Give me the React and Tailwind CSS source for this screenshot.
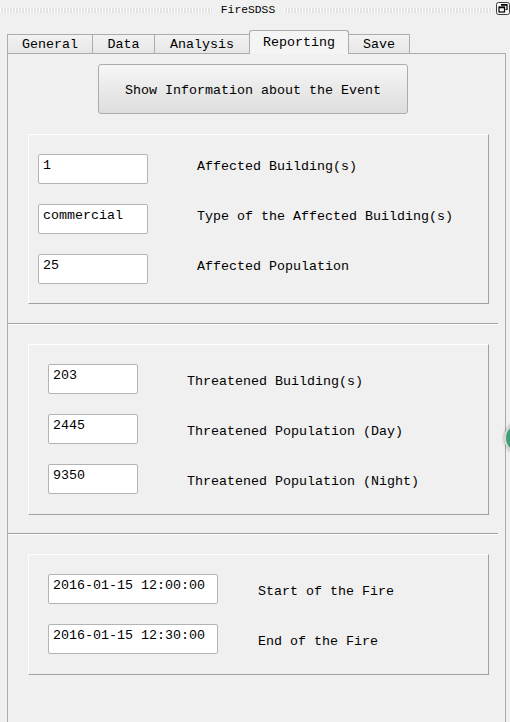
import React from "react";

const font = "font-['Liberation_Mono','DejaVu_Sans_Mono',monospace]";
const dots =
  "h-[5px] bg-[linear-gradient(90deg,#ffffff_50%,#e2e2e2_50%)] bg-[length:3px_5px]";

const tabs = [
  { name: "General", w: "w-[85px]" },
  { name: "Data", w: "w-[62px]" },
  { name: "Analysis", w: "w-[95px]" },
  { name: "Reporting", w: "w-[100px]", active: true },
  { name: "Save", w: "w-[61px]", last: true },
];

const Field = ({ value, width }) => (
  <div
    className={`${width} h-[30px] shrink-0 bg-white border border-[#b4b4b4] rounded-[2px] pl-[4px] pt-[3px] text-[13.33px] leading-[16px] text-black`}
  >
    {value}
  </div>
);

const Row = ({ value, width, label, gap, shift }) => (
  <div className="flex items-start">
    <Field value={value} width={width} />
    <span
      className={`${gap} ${shift} text-[13.33px] leading-[16px] text-black whitespace-pre`}
    >
      {label}
    </span>
  </div>
);

const Group = ({ children, height, pad }) => (
  <div
    className={`ml-[20px] w-[461px] ${height} border-t border-l border-white border-r border-b border-r-[#a0a0a0] border-b-[#a0a0a0] ${pad} flex flex-col gap-[20px]`}
  >
    {children}
  </div>
);

const Separator = () => (
  <div className="w-[490px] h-[2px] border-t border-[#a0a0a0] border-b border-b-white" />
);

const RestoreIcon = () => (
  <svg width="14" height="13" viewBox="0 0 14 13" className="shrink-0">
    <rect x="0.5" y="0.5" width="13" height="12" rx="2" fill="#f4f4f4" stroke="#3c3c3c" />
    <path d="M5 2.5h6v5h-1.5" fill="none" stroke="#000" strokeWidth="1.2" />
    <rect x="3" y="5" width="5.5" height="5" fill="none" stroke="#000" strokeWidth="1.2" />
    <path d="M3 5.6h5.5M5 3.1h6" stroke="#000" strokeWidth="1.2" />
  </svg>
);

export default function App() {
  return (
    <div
      className={`relative w-[510px] h-[722px] overflow-hidden bg-[#f0f0f0] ${font} flex flex-col`}
    >
      {/* title bar */}
      <div className="h-[20px] flex items-center shrink-0">
        <div className={`w-[212px] ${dots}`} />
        <div className="w-[73px] text-center text-[11.33px] leading-[14px] text-black">
          FireSDSS
        </div>
        <div className={`w-[209px] ${dots}`} />
        <div className="ml-[3px] -mt-[4px]">
          <RestoreIcon />
        </div>
      </div>

      {/* tabs */}
      <div className="mt-[11px] h-[22px] flex items-end pl-[7px] shrink-0">
        {tabs.map((t) =>
          t.active ? (
            <div
              key={t.name}
              className={`${t.w} relative z-10 -mb-px h-[24px] border-l border-t border-r border-[#acacac] rounded-t-[3px] bg-[#f4f4f4] flex items-center justify-center text-[13.33px] text-black pt-[1px]`}
            >
              {t.name}
            </div>
          ) : (
            <div
              key={t.name}
              className={`${t.w} h-[19px] border-t border-[#acacac] ${
                t.last ? "border-r" : "border-l"
              } bg-[linear-gradient(#f2f2f2,#e6e6e6)] flex items-center justify-center text-[13.33px] text-black pt-[1px]`}
            >
              {t.name}
            </div>
          )
        )}
      </div>

      {/* pane */}
      <div className="ml-[7px] w-[499px] flex-1 border-l border-t border-r border-[#acacac] flex flex-col">
        <button className="mt-[10px] ml-[90px] w-[310px] h-[50px] shrink-0 rounded-[3px] border border-[#acacac] bg-[linear-gradient(#f6f6f6,#dddddd)] text-[13.33px] text-black pt-[4px]">
          Show Information about the Event
        </button>

        <div className="mt-[20px]">
          <Group height="h-[170px]" pad="pl-[9px] pt-[19px]">
            <Row value="1" width="w-[110px]" label="Affected Building(s)" gap="ml-[49px]" shift="mt-[5px]" />
            <Row value="commercial" width="w-[110px]" label="Type of the Affected Building(s)" gap="ml-[49px]" shift="mt-[5px]" />
            <Row value="25" width="w-[110px]" label="Affected Population" gap="ml-[49px]" shift="mt-[5px]" />
          </Group>
        </div>

        <div className="mt-[19px]">
          <Separator />
        </div>

        <div className="mt-[19px]">
          <Group height="h-[171px]" pad="pl-[19px] pt-[19px]">
            <Row value="203" width="w-[90px]" label="Threatened Building(s)" gap="ml-[49px]" shift="mt-[10px]" />
            <Row value="2445" width="w-[90px]" label="Threatened Population (Day)" gap="ml-[49px]" shift="mt-[10px]" />
            <Row value="9350" width="w-[90px]" label="Threatened Population (Night)" gap="ml-[49px]" shift="mt-[10px]" />
          </Group>
        </div>

        <div className="mt-[18px]">
          <Separator />
        </div>

        <div className="mt-[19px]">
          <Group height="h-[121px]" pad="pl-[19px] pt-[19px]">
            <Row value="2016-01-15 12:00:00" width="w-[170px]" label="Start of the Fire" gap="ml-[40px]" shift="mt-[10px]" />
            <Row value="2016-01-15 12:30:00" width="w-[170px]" label="End of the Fire" gap="ml-[40px]" shift="mt-[10px]" />
          </Group>
        </div>
      </div>

      {/* floating widget peeking in at the right edge */}
      <div className="absolute left-[504px] top-[422px] w-[32px] h-[32px] rounded-full bg-[#3f9f74] border-2 border-[#d8d8d8] shadow-[0_0_3px_rgba(0,0,0,0.35)]" />
    </div>
  );
}
